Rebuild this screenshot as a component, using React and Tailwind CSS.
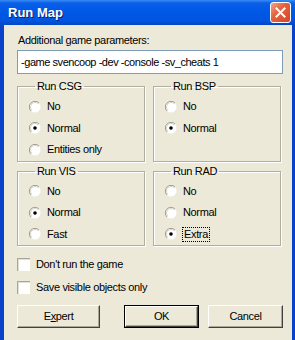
// Run Map dialog — classic Win32 look inside an XP (Luna) frame
const FONT = { fontFamily: '"Liberation Sans", Arial, sans-serif' }

export default function App() {
  return (
    <div className="w-[295px] h-[340px] overflow-hidden bg-[#0842c8] flex flex-col" style={FONT}>
      <TitleBar />
      <div className="flex-1 ml-[4px] mr-[3px] bg-[#ece9d8] text-black text-[11px] tracking-[-0.35px] pl-[13px] pr-[8px] pt-[8px]">
        <div className="h-[14px] leading-[14px] pl-[1px]">Additional game parameters:</div>
        <div className="mt-[3px] h-[24px] w-[266px] bg-white border border-[#7f9db9] flex items-center pl-[3px]">
          <span className="leading-none tracking-[-0.45px]">-game svencoop -dev -console -sv_cheats 1</span>
        </div>

        <div className="mt-[6px] grid grid-cols-[128px_128px] gap-x-[8px] gap-y-[3px]">
          <Group title="Run CSG" items={['No', 'Normal', 'Entities only']} selected={1} />
          <Group title="Run BSP" items={['No', 'Normal']} selected={1} />
          <Group title="Run VIS" items={['No', 'Normal', 'Fast']} selected={1} />
          <Group title="Run RAD" items={['No', 'Normal', 'Extra']} selected={2} focus />
        </div>

        <div className="mt-[12px] flex flex-col gap-[10px]">
          <Check label="Don't run the game" />
          <Check label="Save visible objects only" />
        </div>

        <div className="mt-[11px] flex items-center w-[266px]">
          <Button className="w-[83px]">
            E<span className="underline">x</span>pert
          </Button>
          <div className="ml-auto flex gap-[9px]">
            <Button className="w-[75px]" isDefault>OK</Button>
            <Button className="w-[75px]">Cancel</Button>
          </div>
        </div>
      </div>
    </div>
  )
}

function TitleBar() {
  return (
    <div className="h-[25px] shrink-0 flex items-center pl-[8px] pr-[4px] bg-[linear-gradient(to_bottom,#3b8cf5_0%,#0a5fe8_12%,#0058e6_45%,#0055e0_80%,#0046c8_100%)]">
      <span className="text-white font-bold text-[13px] [text-shadow:1px_1px_0_#0a1f6e]">Run Map</span>
      <div className="ml-auto w-[21px] h-[21px] rounded-[3px] border border-white bg-[linear-gradient(135deg,#f2a48c_0%,#e5633f_40%,#d4452a_100%)] flex items-center justify-center">
        <svg width="11" height="11" viewBox="0 0 11 11">
          <path d="M1.5 1.5 L9.5 9.5 M9.5 1.5 L1.5 9.5" stroke="#fff" strokeWidth="2" strokeLinecap="square" />
        </svg>
      </div>
    </div>
  )
}

function Group({ title, items, selected, focus }) {
  return (
    <fieldset className="border border-[#b0ae9e] shadow-[inset_1px_1px_0_#fff,1px_1px_0_#fff] px-[11px] pt-[3px] pb-0">
      <legend className="ml-[6px] px-[2px] leading-[13px]">{title}</legend>
      <div className="flex flex-col">
        {items.map((it, i) => (
          <Radio key={it} label={it} checked={i === selected} focus={focus && i === selected} />
        ))}
      </div>
    </fieldset>
  )
}

function Radio({ label, checked, focus }) {
  return (
    <div className="h-[21.5px] flex items-center gap-[6px]">
      <svg width="12" height="12" viewBox="0 0 12 12" className="shrink-0">
        <circle cx="6" cy="6" r="5.5" fill="#fff" />
        <path d="M10 2 A5.5 5.5 0 0 0 2 10" fill="none" stroke="#9d9d92" strokeWidth="1" />
        <path d="M9.2 2.8 A4.5 4.5 0 0 0 2.8 9.2" fill="none" stroke="#d8d6c8" strokeWidth="1" />
        {checked && <circle cx="6" cy="6" r="1.8" fill="#000" />}
      </svg>
      <span className={focus ? 'outline outline-1 outline-dotted outline-black px-[1px] leading-[13px]' : 'leading-[13px]'}>
        {label}
      </span>
    </div>
  )
}

function Check({ label }) {
  return (
    <div className="h-[13px] flex items-center gap-[6px]">
      <div className="w-[13px] h-[13px] bg-white border-t border-l border-[#a8a798] shadow-[inset_1px_1px_0_#e2e0d4]" />
      <span className="leading-[13px]">{label}</span>
    </div>
  )
}

function Button({ children, className = '', isDefault }) {
  return (
    <div className={`${className} h-[23px] ${isDefault ? 'border border-black' : ''}`}>
      <div className="h-full flex items-center justify-center bg-[#ece9d8] border-t border-l border-white border-r border-b border-r-[#404040] border-b-[#404040] shadow-[inset_-1px_-1px_0_#aca899]">
        {children}
      </div>
    </div>
  )
}
